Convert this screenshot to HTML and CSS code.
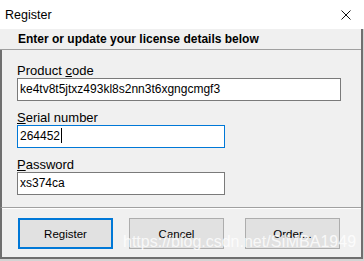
FILE: index.html
```html
<!DOCTYPE html>
<html>
<head>
<meta charset="utf-8">
<link rel="stylesheet" href="styles.css">
</head>
<body>
<div class="window">
  <div class="titlebar">
    <span class="title">Register</span>
    <svg class="close" width="10" height="10" viewBox="0 0 10 10"><path d="M0.5 0.5L9.5 9.5M9.5 0.5L0.5 9.5" stroke="#111" stroke-width="1"/></svg>
  </div>
  <div class="frame">
    <div class="header">Enter or update your license details below</div>
    <div class="body">
      <div class="field">
        <label class="label">Product <u>c</u>ode</label>
        <div class="input wide">ke4tv8t5jtxz493kl8s2nn3t6xgngcmgf3</div>
      </div>
      <div class="field">
        <label class="label"><u>S</u>erial number</label>
        <div class="input focus">264452<span class="caret"></span></div>
      </div>
      <div class="field">
        <label class="label"><u>P</u>assword</label>
        <div class="input">xs374ca</div>
      </div>
    </div>
    <div class="footer">
      <button class="btn default">Register</button>
      <button class="btn cancel">Cancel</button>
      <button class="btn order">Order...</button>
      <div class="watermark">https://blog.csdn.net/SIMBA1949</div>
    </div>
  </div>
</div>
</body>
</html>
```
FILE: styles.css
```css
* { box-sizing: border-box; }
html, body { margin: 0; padding: 0; }
body {
  width: 364px;
  height: 261px;
  background: #d4d4d4;
  font-family: "Liberation Sans", Arial, sans-serif;
  font-size: 12px;
  color: #000;
  overflow: hidden;
}
.window { width: 364px; }
.titlebar {
  height: 29px;
  background: #fff;
  display: flex;
  align-items: center;
  padding-left: 5px;
  padding-right: 13px;
}
.title { flex: 1; font-size: 12.5px; line-height: 16px; }
.close { display: block; }
.frame {
  width: 363px;
  background: #f0f0f0;
  border-right: 2px solid #6f6f6f;
  border-bottom: 2px solid #6f6f6f;
  position: relative;
}
.header {
  height: 21px;
  padding-left: 18px;
  font-weight: bold;
  font-size: 12px;
  line-height: 20px;
  border-bottom: 1px solid #a0a0a0;
}
.body {
  border-left: 2px solid #6f6f6f;
  padding: 13px 0 12px 15px;
  display: flex;
  flex-direction: column;
  gap: 9px;
}
.field { display: flex; flex-direction: column; }
.label { display: block; font-size: 13px; line-height: 15px; height: 15px; }
.input {
  width: 208px;
  height: 23px;
  background: #fff;
  border: 1px solid #7a7a7a;
  padding-left: 2px;
  font-size: 12px;
  line-height: 21px;
  white-space: nowrap;
}
.input.wide { width: 324px; }
.input.focus { border-color: #0078d7; }
.caret {
  display: inline-block;
  width: 1px;
  height: 15px;
  margin-left: 1px;
  background: #000;
  vertical-align: -3px;
}
.footer {
  border-left: 2px solid #6f6f6f;
  border-top: 1px solid #a0a0a0;
  box-shadow: inset 0 1px 0 #fff;
  height: 50px;
  padding: 10px 0 0 16px;
  display: flex;
  align-items: flex-start;
  position: relative;
  overflow: hidden;
}
.btn {
  width: 95px;
  height: 31px;
  background: #e1e1e1;
  border: 1px solid #adadad;
  font-family: inherit;
  font-size: 11.5px;
  color: #000;
  padding: 0;
  margin: 0;
}
.btn.default { border: 2px solid #0078d7; }
.btn.cancel { margin-left: 16px; }
.btn.order { margin-left: 21px; }
.watermark {
  position: absolute;
  left: 121px;
  top: 25px;
  font-family: "Liberation Sans", sans-serif;
  font-size: 16px;
  line-height: 18px;
  color: rgba(255,255,255,0.8);
  white-space: nowrap;
}
```
